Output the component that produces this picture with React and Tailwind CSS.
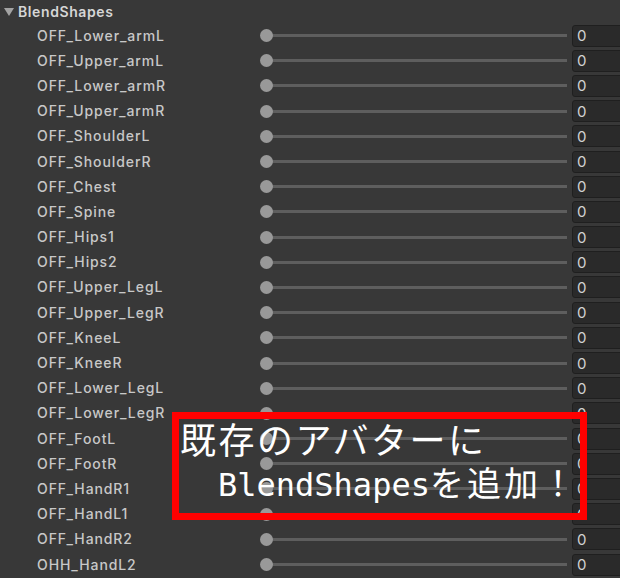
import React from "react";

const names = [
  "OFF_Lower_armL",
  "OFF_Upper_armL",
  "OFF_Lower_armR",
  "OFF_Upper_armR",
  "OFF_ShoulderL",
  "OFF_ShoulderR",
  "OFF_Chest",
  "OFF_Spine",
  "OFF_Hips1",
  "OFF_Hips2",
  "OFF_Upper_LegL",
  "OFF_Upper_LegR",
  "OFF_KneeL",
  "OFF_KneeR",
  "OFF_Lower_LegL",
  "OFF_Lower_LegR",
  "OFF_FootL",
  "OFF_FootR",
  "OFF_HandR1",
  "OFF_HandL1",
  "OFF_HandR2",
  "OHH_HandL2",
];

function Row({ name }) {
  return (
    <div className="flex h-[25.2px] items-center">
      <div className="w-[260px] shrink-0 pl-[37px] text-[14px] font-medium leading-none tracking-[0.9px] text-[#c8c8c8]">
        {name}
      </div>
      <div className="relative flex h-[13px] w-[307px] shrink-0 items-center">
        <div className="ml-[6px] h-[3px] flex-1 bg-[#5e5e5e]" />
        <div className="absolute left-0 top-0 h-[13px] w-[13px] rounded-full bg-[#999999]" />
      </div>
      <div className="ml-[5px] flex h-[22px] w-[70px] shrink-0 items-center rounded-[3px] border border-[#1f1f1f] bg-[#2a2a2a] pl-[4px] text-[15px] leading-none text-[#d2d2d2]">
        0
      </div>
    </div>
  );
}

export default function App() {
  return (
    <div
      className="relative h-[578px] w-[620px] overflow-hidden bg-[#383838]"
      style={{ fontFamily: "Inter, 'Noto Sans', sans-serif" }}
    >
      <div className="flex h-[23px] items-center pl-[4px]">
        <svg width="10" height="10" viewBox="0 0 10 10" className="mr-[4px]">
          <polygon points="0,1 10,1 5,9" fill="#a3a3a3" />
        </svg>
        <span className="text-[14px] font-semibold leading-none tracking-[0.6px] text-[#d6d6d6]">
          BlendShapes
        </span>
      </div>
      {names.map((n) => (
        <Row key={n} name={n} />
      ))}

      <div className="absolute left-[172px] top-[412px] h-[108px] w-[415px] border-[7px] border-[#ff0000]">
        <div
          className="absolute left-[1px] top-[1px] whitespace-nowrap text-[36px] leading-none tracking-[2.5px] text-white"
          style={{ fontFamily: "'Noto Sans CJK JP', sans-serif" }}
        >
          既存のアバターに
        </div>
        <div className="absolute left-[39px] top-[46px] flex items-baseline whitespace-nowrap leading-none text-white">
          <span
            className="text-[32px]"
            style={{ fontFamily: "'DejaVu Sans Mono', monospace" }}
          >
            BlendShapes
          </span>
          <span
            className="text-[34px] tracking-[3px]"
            style={{ fontFamily: "'Noto Sans CJK JP', sans-serif" }}
          >
            を追加！
          </span>
        </div>
      </div>
    </div>
  );
}
